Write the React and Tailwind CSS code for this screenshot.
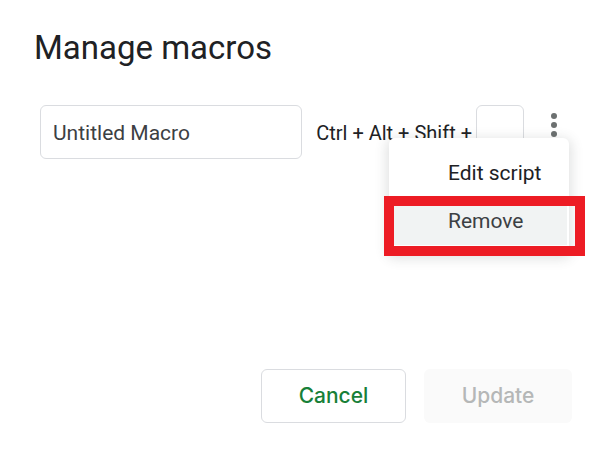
import React, { useState } from "react";

const MacroMenu = ({ onEdit, onRemove }) => (
  <div
    role="menu"
    className="absolute top-[33px] right-[3px] z-10 w-[180px] rounded-md bg-white pt-[11px] pr-[2px] pb-2 text-[21px] leading-6 shadow-[0_3px_12px_3px_rgba(60,64,67,0.15)]"
  >
    <button
      type="button"
      role="menuitem"
      onClick={onEdit}
      className="block h-12 w-full pl-[59px] text-left whitespace-nowrap text-[#202124]"
    >
      Edit script
    </button>
    <div className="relative">
      <button
        type="button"
        role="menuitem"
        onClick={onRemove}
        className="block h-12 w-full bg-[#f1f3f3] pl-[59px] text-left whitespace-nowrap text-[#3c4043]"
      >
        Remove
      </button>
      <div className="pointer-events-none absolute -top-px -right-[18px] -left-[5px] h-[60px] border-10 border-[#ed1c24]" />
    </div>
  </div>
);

const MacroRow = () => {
  const [name, setName] = useState("Untitled Macro");
  const [shortcut, setShortcut] = useState("");
  const [menuOpen, setMenuOpen] = useState(true);

  const closeMenu = () => setMenuOpen(false);

  return (
    <div className="flex items-center pl-[6px] text-[21px]">
      <input
        type="text"
        aria-label="Macro name"
        value={name}
        onChange={(e) => setName(e.target.value)}
        className="h-[54px] min-w-0 flex-1 rounded-md border border-[#dadce0] px-3 pt-[2px] text-[#3c4043] outline-none"
      />
      <label
        htmlFor="shortcut"
        className="ml-[14px] pt-[2px] text-[20px] whitespace-nowrap text-[#202124]"
      >
        Ctrl + Alt + Shift +
      </label>
      <input
        id="shortcut"
        type="text"
        maxLength={1}
        value={shortcut}
        onChange={(e) => setShortcut(e.target.value)}
        className="ml-1 h-[54px] w-12 rounded-md border border-[#dadce0] text-center outline-none"
      />
      <div className="relative ml-[21px] h-[54px] pr-[9px]">
        <button
          type="button"
          aria-label="More options"
          aria-expanded={menuOpen}
          onClick={() => setMenuOpen(!menuOpen)}
          className="block pt-2"
        >
          <svg width="18" height="26" viewBox="0 0 18 26" fill="#6c7070">
            <circle cx="9" cy="3" r="3" />
            <circle cx="9" cy="12" r="3" />
            <circle cx="9" cy="21" r="3" />
          </svg>
        </button>
        {menuOpen && <MacroMenu onEdit={closeMenu} onRemove={closeMenu} />}
      </div>
    </div>
  );
};

const App = () => {
  return (
    <main className="flex min-h-screen flex-col bg-white pt-7 pr-[37px] pb-[31px] pl-[34px] font-[Roboto,sans-serif]">
      <h1 className="text-[33px] leading-10 text-[#202124]">Manage macros</h1>
      <div className="mt-[37px]">
        <MacroRow />
      </div>
      <div className="mt-auto flex justify-end gap-[18px] font-[Inter,sans-serif] text-[21px] font-medium">
        <button
          type="button"
          className="h-[54px] w-[145px] rounded-md border border-[#dadce0] text-[#188038]"
        >
          Cancel
        </button>
        <button
          type="button"
          disabled
          className="h-[54px] w-[148px] rounded-md bg-[#fafafa] text-[#b5b7b7]"
        >
          Update
        </button>
      </div>
    </main>
  );
};

export default App;
